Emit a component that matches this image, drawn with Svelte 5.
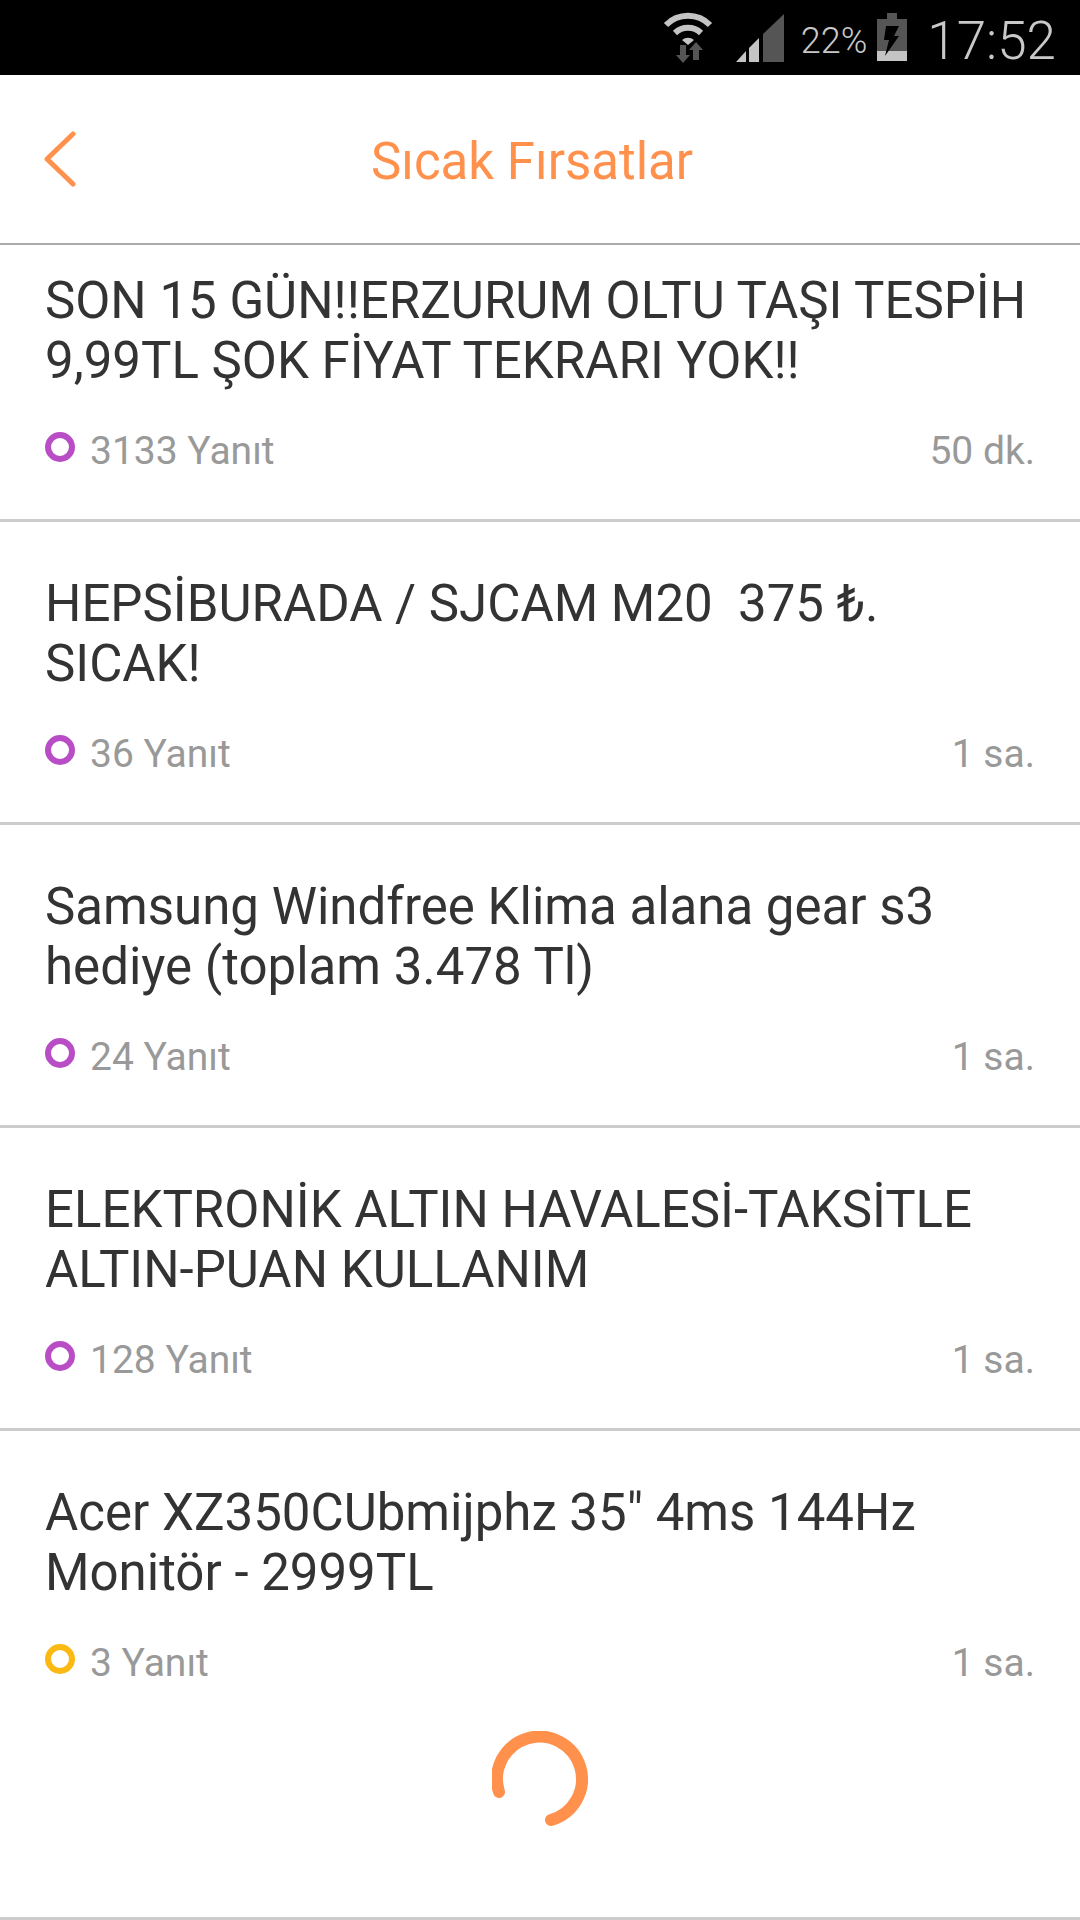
<script>
  const threads = [
    { title: 'SON 15 GÜN!!ERZURUM OLTU TAŞI TESPİH 9,99TL ŞOK FİYAT TEKRARI YOK!!', replies: 3133, age: '50 dk.', hot: true },
    { title: 'HEPSİBURADA / SJCAM M20  375 ₺. SICAK!', replies: 36, age: '1 sa.', hot: true },
    { title: 'Samsung Windfree Klima alana gear s3 hediye (toplam 3.478 Tl)', replies: 24, age: '1 sa.', hot: true },
    { title: 'ELEKTRONİK ALTIN HAVALESİ-TAKSİTLE ALTIN-PUAN KULLANIM', replies: 128, age: '1 sa.', hot: true },
    { title: 'Acer XZ350CUbmijphz 35" 4ms 144Hz Monitör - 2999TL', replies: 3, age: '1 sa.', hot: false }
  ];
</script>

<div class="screen">
  <div class="statusbar">
    <svg class="wifi" width="50" height="52" viewBox="0 0 50 52">
      <g fill="none" stroke="#c4c4c4" stroke-width="6">
        <path d="M3 13 A31 31 0 0 1 47 13" />
        <path d="M12 21 A19 19 0 0 1 38 21" />
      </g>
      <path d="M25 33 L19 28 A9 9 0 0 1 31 28 Z" fill="#c4c4c4" />
      <path d="M17 33 h6 v10 h4 l-7 8 l-7 -8 h4 Z" fill="#555" />
      <path d="M30 48 h6 v-10 h4 l-7 -8 l-7 8 h4 Z" fill="#555" />
    </svg>
    <svg class="signal" width="48" height="48" viewBox="0 0 48 48">
      <path d="M0 48 L10 37 V48 Z" fill="#c4c4c4" />
      <path d="M13 34 L23 24 V48 H13 Z" fill="#c4c4c4" />
      <path d="M27 20 L48 0 V48 H27 Z" fill="#555" />
    </svg>
    <span class="battery-level">22%</span>
    <svg class="battery" width="30" height="48" viewBox="0 0 30 48">
      <path d="M10 0 H20 V6 H30 V38 H0 V6 H10 Z" fill="#555" />
      <rect x="0" y="38" width="30" height="10" fill="#c4c4c4" />
      <path d="M9 13 H22 L17 23 H22 L8 43 L12 27 H7 Z" fill="#000" />
    </svg>
    <span class="clock">17:52</span>
  </div>

  <header class="header">
    <svg class="back" width="32" height="58" viewBox="0 0 32 58">
      <path d="M29 4 L3 29 L29 54" fill="none" stroke="#ff914d" stroke-width="5" stroke-linecap="round" stroke-linejoin="round" />
    </svg>
    <h1>Sıcak Fırsatlar</h1>
  </header>

  <div class="list">
    {#each threads as thread, i}
      <div class="item" class:first={i === 0} class:last={i === threads.length - 1}>
        <div class="title">{thread.title}</div>
        <div class="meta">
          <span class="replies"><i class="dot" class:hot={thread.hot}></i>{thread.replies} Yanıt</span>
          <span>{thread.age}</span>
        </div>
      </div>
    {/each}
  </div>

  <div class="loader">
    <svg width="96" height="96" viewBox="0 0 96 96">
      <path d="M7 61 A42.5 42.5 0 1 1 59 89" fill="none" stroke="#ff914d" stroke-width="12" stroke-linecap="round" />
    </svg>
  </div>
</div>

<style>
  :global(body) {
    margin: 0;
    background: #fff;
  }

  .screen {
    width: 1080px;
    height: 1920px;
    overflow: hidden;
    display: flex;
    flex-direction: column;
    background: #fff;
    font-family: Roboto, "Noto Sans", sans-serif;
  }

  .statusbar {
    height: 75px;
    flex: none;
    background: #000;
    display: flex;
    align-items: flex-start;
    justify-content: flex-end;
    padding-right: 24px;
    color: #c8c8c8;
  }

  .wifi {
    margin-top: 12px;
  }

  .signal {
    margin: 14px 0 0 23px;
  }

  .battery-level {
    margin: 19px 0 0 17px;
    font-size: 36px;
    line-height: 44px;
    font-weight: 300;
    white-space: nowrap;
  }

  .battery {
    margin: 13px 0 0 10px;
  }

  .clock {
    margin: 9px 0 0 20px;
    font-size: 53px;
    line-height: 64px;
    font-weight: 300;
    white-space: nowrap;
  }

  .header {
    height: 168px;
    flex: none;
    display: flex;
    align-items: center;
    padding-left: 44px;
    border-bottom: 2px solid #aaa;
  }

  .header h1 {
    margin: 6px 0 0 295px;
    font-size: 51px;
    line-height: 60px;
    font-weight: 400;
    color: #ff914d;
    white-space: nowrap;
  }

  .item {
    padding: 52px 45px 45px;
    border-bottom: 3px solid #ccc;
  }

  .item.first {
    padding-top: 26px;
  }

  .item.last {
    padding-bottom: 0;
    border-bottom: none;
  }

  .title {
    font-size: 51px;
    line-height: 60px;
    color: #333;
    white-space: pre-wrap;
  }

  .meta {
    margin-top: 37px;
    display: flex;
    justify-content: space-between;
    font-size: 39px;
    line-height: 46px;
    color: #999;
  }

  .replies {
    display: flex;
    align-items: center;
    gap: 15px;
  }

  .dot {
    width: 30px;
    height: 30px;
    box-sizing: border-box;
    border: 6px solid #fdb913;
    border-radius: 50%;
    margin-top: -9px;
  }

  .dot.hot {
    border-color: #b84dc6;
  }

  .loader {
    flex: 1;
    display: flex;
    justify-content: center;
    align-items: flex-start;
    padding-top: 45px;
    border-bottom: 3px solid #ccc;
  }
</style>
